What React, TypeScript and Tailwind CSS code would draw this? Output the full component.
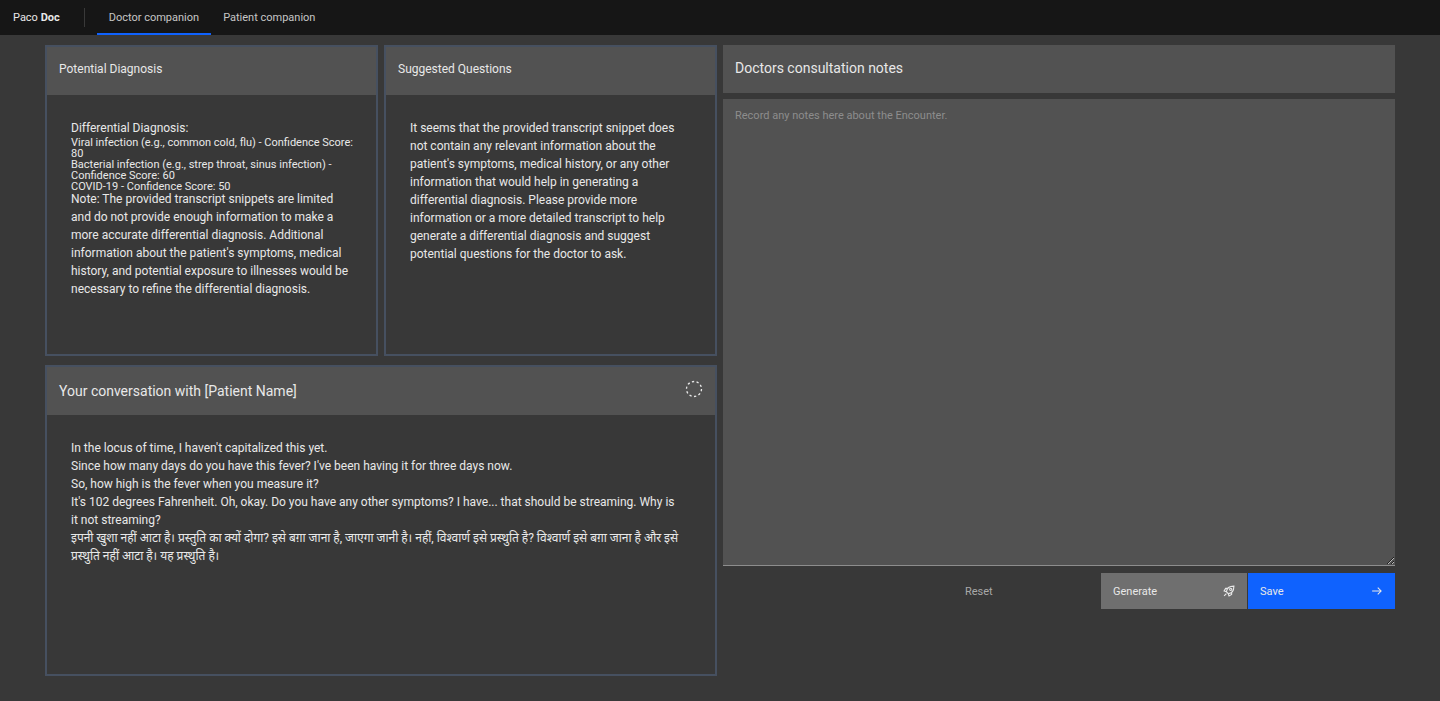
import { FC, ReactNode } from "react";

const diagnoses = [
  "Viral infection (e.g., common cold, flu) - Confidence Score: 80",
  "Bacterial infection (e.g., strep throat, sinus infection) - Confidence Score: 60",
  "COVID-19 - Confidence Score: 50",
];

const conversation = [
  "In the locus of time, I haven't capitalized this yet.",
  "Since how many days do you have this fever? I've been having it for three days now.",
  "So, how high is the fever when you measure it?",
  "It's 102 degrees Fahrenheit. Oh, okay. Do you have any other symptoms? I have... that should be streaming. Why is it not streaming?",
  "इपनी खुशा नहीं आटा है। प्रस्तुति का क्यों दोगा? इसे बग़ा जाना है, जाएगा जानी है। नहीं, विश्वार्ण इसे प्रस्थुति है? विश्वार्ण इसे बग़ा जाना है और इसे प्रस्थुति नहीं आटा है। यह प्रस्थुति है।",
];

const RocketIcon: FC = () => (
  <svg width="12" height="12" viewBox="0 0 32 32" fill="none" stroke="currentColor" strokeWidth="3" aria-hidden="true">
    <path d="M9 18C10 9 18 3 29 3c0 11-6 19-15 20z" />
    <circle cx="20.5" cy="11.5" r="3" />
    <path d="M13 9H7l-4 7 6 2M23 19v6l-7 4-2-6M9 23l-6 6" />
  </svg>
);

const ArrowRightIcon: FC = () => (
  <svg width="12" height="12" viewBox="0 0 16 16" fill="none" stroke="currentColor" strokeWidth="1.4" aria-hidden="true">
    <path d="M1.500 8h12M9 3.500 13.500 8 9 12.500" />
  </svg>
);

const CircleDashIcon: FC = () => (
  <svg className="mb-1" width="18" height="18" viewBox="0 0 18 18" fill="none" aria-hidden="true">
    <circle cx="9" cy="9" r="7.5" stroke="currentColor" strokeWidth="1.3" strokeDasharray="2.3 2.412" />
  </svg>
);

interface PanelProps {
  title: string;
  titleClass?: string;
  bodyClass?: string;
  icon?: ReactNode;
  children: ReactNode;
}

const Panel: FC<PanelProps> = ({
  title,
  titleClass = "pb-1 text-xs",
  bodyClass = "p-6",
  icon,
  children,
}) => (
  <section className="min-h-[311px] border-2 border-[#465060] bg-[#383838]">
    <header className="flex h-12 items-center justify-between bg-[#525252] px-3">
      <h2 className={titleClass}>{title}</h2>
      {icon}
    </header>
    <div className={`text-xs leading-[18px] ${bodyClass}`}>{children}</div>
  </section>
);

export default function App() {
  return (
    <div className="flex min-h-screen flex-col bg-[#383838] font-[Roboto,'Noto_Sans',sans-serif] text-[#e8e8e8]">
      <header className="flex h-[35px] items-stretch bg-[#161616] text-[11px]">
        <a href="#" className="flex items-center pt-0.5 pl-[13px]">
          <span>
            Paco <b>Doc</b>
          </span>
        </a>
        <span className="my-2 ml-6 border-l border-[#393939]" />
        <nav className="ml-3 flex text-[#c6c6c6]">
          <a href="#doctor" className="flex items-center border-b-2 border-[#0f62fe] px-3 pt-1">
            Doctor companion
          </a>
          <a href="#patient" className="flex items-center px-3 pt-0.5">
            Patient companion
          </a>
        </nav>
      </header>

      <main className="grid grid-cols-2 items-start gap-1.5 px-[45px] pt-2.5">
        <div className="flex flex-col gap-[9px]">
          <div className="grid grid-cols-2 gap-1.5">
            <Panel title="Potential Diagnosis">
              <p>Differential Diagnosis:</p>
              <ul className="-mr-2 -mb-0.5 text-[11px] leading-[11px]">
                {diagnoses.map((item) => (
                  <li key={item}>{item}</li>
                ))}
              </ul>
              <p>
                Note: The provided transcript snippets are limited and do not
                provide enough information to make a more accurate differential
                diagnosis. Additional information about the patient's symptoms,
                medical history, and potential exposure to illnesses would be
                necessary to refine the differential diagnosis.
              </p>
            </Panel>
            <Panel title="Suggested Questions">
              <p>
                It seems that the provided transcript snippet does not contain
                any relevant information about the patient's symptoms, medical
                history, or any other information that would help in generating
                a differential diagnosis. Please provide more information or a
                more detailed transcript to help generate a differential
                diagnosis and suggest potential questions for the doctor to ask.
              </p>
            </Panel>
          </div>
          <Panel
            title="Your conversation with [Patient Name]"
            titleClass="text-sm"
            bodyClass="py-6 pr-9 pl-6"
            icon={<CircleDashIcon />}
          >
            {conversation.map((line) => (
              <p key={line}>{line}</p>
            ))}
          </Panel>
        </div>

        <div className="flex flex-col">
          <label htmlFor="notes" className="flex h-12 items-center bg-[#525252] px-3 pb-0.5 text-sm">
            Doctors consultation notes
          </label>
          <textarea
            id="notes"
            placeholder="Record any notes here about the Encounter."
            className="mt-1.5 h-[467px] w-full border-b border-[#8d8d8d] bg-[#525252] px-3 py-2 text-[11px] leading-[18px] placeholder:text-[#8d8d8d]"
          />
          <div className="mt-[7px] flex h-9 justify-end gap-px text-[11px]">
            <button type="button" className="w-[147px] px-3 pt-0.5 text-left text-[#a8a8a8]">
              Reset
            </button>
            <button type="button" className="flex w-[146px] items-center justify-between bg-[#6f6f6f] px-3">
              <span className="pt-0.5">Generate</span>
              <RocketIcon />
            </button>
            <button type="button" className="flex w-[147px] items-center justify-between bg-[#0f62fe] px-3">
              <span className="pt-0.5">Save</span>
              <ArrowRightIcon />
            </button>
          </div>
        </div>
      </main>
    </div>
  );
}
